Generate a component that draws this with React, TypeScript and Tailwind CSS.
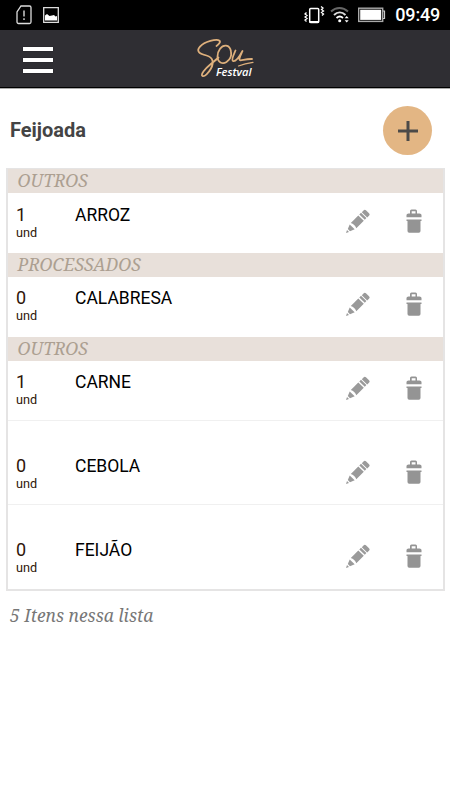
const groups = [
  { id: 1, category: "OUTROS", qty: 1, name: "ARROZ" },
  { id: 2, category: "PROCESSADOS", qty: 0, name: "CALABRESA" },
  { id: 3, category: "OUTROS", qty: 1, name: "CARNE" },
  { id: 4, category: "", qty: 0, name: "CEBOLA" },
  { id: 5, category: "", qty: 0, name: "FEIJÃO" },
];

function StatusBar() {
  return (
    <div className="flex h-[30px] items-center bg-black text-white">
      <svg className="ml-4" width="16" height="20" viewBox="0 0 16 20" fill="none">
        <path d="M5 1h8.5a1.5 1.5 0 0 1 1.5 1.5v14.5a1.5 1.5 0 0 1-1.5 1.5h-11a1.5 1.5 0 0 1-1.5-1.5V7z" stroke="#ddd" strokeWidth="1.3" />
        <path d="M8 5.5v6M8 13.3v1.7" stroke="#ccc" strokeWidth="1.5" />
      </svg>
      <svg className="ml-[11px]" width="16" height="16" viewBox="0 0 16 16">
        <path d="M.7.7h14.6v14.6H.7z" fill="none" stroke="#ddd" strokeWidth="1.3" />
        <path d="M2 13.5V8.5l2-1.5 2.5 2 2.5-.5 2-.5 1.5 1.5 1.5-.5v4.5z" fill="#fff" />
      </svg>
      <svg className="ml-auto" width="21" height="20" viewBox="0 0 21 20" fill="none" stroke="#fff">
        <rect x="5.7" y="3.5" width="9" height="14" rx="1" strokeWidth="1.5" />
        <path d="M5.5 17h9.5" strokeWidth="2" />
        <path d="M2.5 7.5l-1.5 1.5 2 1.5-2 1.5 2 1.5-2 1.5 1.5 1.5M17 1.5l2 1.5-1.5 1.5 2 1.5-2 1.5 2 1.5-1.5 1.5" strokeWidth="1.3" />
      </svg>
      <svg className="ml-[5px]" width="20" height="18" viewBox="0 0 20 18" fill="none">
        <path d="M1 5.5c5-4.7 12-4.7 17 0" stroke="#666" strokeWidth="2" />
        <path d="M4 9c3.5-3.3 8-3.3 11.5 0" stroke="#ddd" strokeWidth="2" />
        <path d="M6.5 12c2-1.8 4.5-1.8 6.5 0" stroke="#fff" strokeWidth="1.8" />
        <circle cx="9.7" cy="14.7" r="1.5" fill="#fff" />
        <path d="M16.7 10l2 2.3h-4zM16.7 16.5l2-2.3h-4z" fill="#fff" />
      </svg>
      <svg className="ml-[8px]" width="28" height="16" viewBox="0 0 28 16" fill="none">
        <rect x=".7" y="1.2" width="24" height="13.2" stroke="#aaa" strokeWidth="1.4" />
        <path d="M2.2 2.7h21v10.2h-21z" fill="#fff" />
        <path d="M25 4h1.5v7.5H25" stroke="#ccc" strokeWidth="1.2" />
      </svg>
      <span className="mr-[10px] ml-[9px] font-[Roboto] text-[18px] leading-[30px] font-medium tracking-[-0.2px]">
        09:49
      </span>
    </div>
  );
}

function Logo() {
  return (
    <svg width="62" height="44" viewBox="194 36.5 62 44" fill="none">
      <g stroke="#deb07c" strokeLinecap="round" strokeLinejoin="round">
        <path d="M216.5 45.5c2-1.3 4.500-4 3-5.300-3-2.300-15 1-19.500 6-4.500 5 0 7 6.500 8.800 7 2 7.500 7.500 4.500 13-2.500 4.500-6.500 8.500-8.500 7.500-2.500-1.300 3-7.500 7.500-11.200 3.500-3 6-5 8.500-7.300" strokeWidth="1.800" />
        <path d="M226 45.200c-4.500-.5-8.500 5-8.500 10.800 0 6 5 8 9 5.500 3.500-2.300 5.200-6.500 4.500-10.500-.5-3.300-2.300-5.500-5-5.800z" strokeWidth="1.800" />
        <path d="M235.500 50c-1.500 3.500-4.500 9.500-2.500 10.500 2.500 1 6.500-4.500 9.500-10-2 4.500-4.500 9-2 9.300 2 .2 5-1.500 11.500-1.300" strokeWidth="1.800" />
        <path d="M238.500 65.500c4-1.700 9-3 14.500-3.700" strokeWidth="1.200" />
      </g>
      <text x="216" y="75.8" fill="#fff" fontFamily="Open Sans, sans-serif" fontSize="11" fontWeight="600" fontStyle="italic" textLength="35.5" lengthAdjust="spacingAndGlyphs">
        Festval
      </text>
    </svg>
  );
}

function Header() {
  return (
    <header className="grid h-[58px] grid-cols-[1fr_62px_1fr] items-center border-b border-black bg-[#2f2e33]">
      <button type="button" aria-label="Menu" className="ml-[22px] flex w-8 flex-col gap-[7px] pt-[3px]">
        <span className="ml-px h-1 w-[30px] bg-white shadow-[0_0_1px_#000]" />
        <span className="ml-px h-1 w-[30px] bg-white shadow-[0_0_1px_#000]" />
        <span className="ml-px h-1 w-[30px] bg-white shadow-[0_0_1px_#000]" />
      </button>
      <Logo />
    </header>
  );
}

function PencilIcon() {
  return (
    <svg width="24" height="24" viewBox="0 0 24 24" fill="#9a9a9a">
      <path d="M0 24l1-3 2 2zM1.800 20l1.900-4.500 5 4.800-4.700 2zM4.800 14l7.500-7.500 5.500 5.300-7.500 7.500c-.8-2.500-3-4.500-5.500-5.300zM13.300 5.500l1.700-1.700 5.400 5.300-1.600 1.700z" />
      <path d="M15.800 3.200l1.700-1.700q1.300-1.300 2.700 0l2.800 2.700q1.300 1.300 0 2.500l-1.800 1.700z" />
    </svg>
  );
}

function TrashIcon() {
  return (
    <svg width="16" height="24" viewBox="0 0 16 24" fill="#949494">
      <path fillRule="evenodd" d="M4 4.5V2q0-1.500 1.500-1.500h4q1.500 0 1.500 1.500v2.500h2.500q2 0 2 1.500v2.300H.5V6q0-1.500 2-1.500zM5.700 4.500h3.800V2.200H5.700z" />
      <path d="M.5 10.500h15v1.500h-1v10q0 1.700-1.700 1.700H3.200q-1.700 0-1.700-1.700V12h-1z" />
    </svg>
  );
}

export default function App() {
  return (
    <div className="h-[800px] w-[450px] overflow-hidden bg-white font-[Roboto,sans-serif]">
      <StatusBar />
      <Header />
      <div className="flex h-20 items-center justify-between border-t border-[#aaa] pr-[18px] pl-2.5">
        <h1 className="pt-[3px] text-[20px] font-bold text-[#444]">Feijoada</h1>
        <button
          type="button"
          aria-label="Adicionar"
          className="mt-1 flex h-[49px] w-[49px] items-center justify-center rounded-full bg-[#e3b684]"
        >
          <svg width="22" height="22" viewBox="0 0 22 22" stroke="#4c4a48" strokeWidth="3">
            <path d="M11 1v20M1 11h20" />
          </svg>
        </button>
      </div>
      <ul className="mr-[5px] ml-1.5 h-[423px] border-2 border-t-1 border-[#e5e4e4]">
        {groups.map((item) => (
          <li key={item.id} className="h-[83.8px]">
            {item.category ? (
              <div className="h-6 bg-[#e8e0da] pl-[9.5px] font-['Noto_Serif','Liberation_Serif',serif] text-[17.5px] leading-[23px] text-[#ac9f91] italic">
                {item.category}
              </div>
            ) : (
              <div className="h-6 border-t border-[#f0f0f0]" />
            )}
            <div className="flex h-[59.8px] items-start pl-2">
              <div className="w-[59px] pt-[11.7px] text-[#2e1508]">
                <div className="text-[18px] leading-5">{item.qty}</div>
                <div className="text-[12.7px] leading-[15px]">und</div>
              </div>
              <span className="pt-[11.7px] text-[17.5px] leading-5 text-black">{item.name}</span>
              <div className="mt-[15.5px] mr-[21px] ml-auto flex gap-9">
                <PencilIcon />
                <TrashIcon />
              </div>
            </div>
          </li>
        ))}
      </ul>
      <p className="mt-3 ml-2.5 font-['Noto_Serif','Liberation_Serif',serif] text-[17.4px] leading-6 text-[#777] italic">
        5 Itens nessa lista
      </p>
    </div>
  );
}
